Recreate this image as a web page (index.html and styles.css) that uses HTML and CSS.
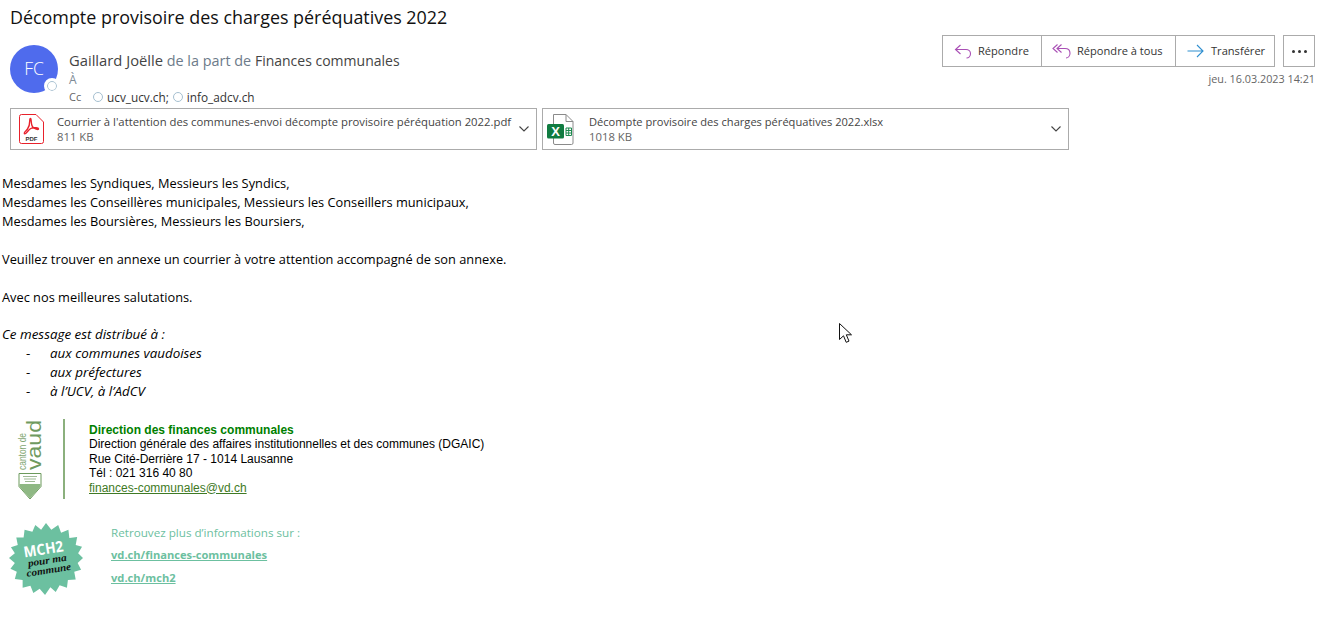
FILE: index.html
```html
<!DOCTYPE html>
<html lang="fr">
<head>
<meta charset="utf-8">
<title>Décompte provisoire des charges péréquatives 2022</title>
<link rel="stylesheet" href="styles.css">
</head>
<body>
<header class="head">
  <h1 class="subject">Décompte provisoire des charges péréquatives 2022</h1>
  <div class="meta">
    <div class="avatar">FC<span class="presence"></span></div>
    <div class="people">
      <div class="from"><span class="sender">Gaillard Joëlle</span> <span class="muted">de la part de</span> <span class="org">Finances communales</span></div>
      <div class="to">À</div>
      <div class="cc"><span class="cc-label">Cc</span><span class="dot"></span><span>ucv_ucv.ch;</span><span class="dot dot-b"></span><span>info_adcv.ch</span></div>
    </div>
    <div class="actions">
      <div class="btn-row">
        <div class="btn-group">
          <button class="btn btn-reply"><svg class="ico" viewBox="0 0 18 18"><path d="M6.500 3 1.500 7.500l5 4.500M1.500 7.500H12c2.600 0 4.500 1.900 4.500 4.300S14.600 16 12.500 16" fill="none" stroke="#a94fb5" stroke-width="1.100"/></svg>Répondre</button>
          <button class="btn btn-all"><svg class="ico ico-all" viewBox="0 0 20 18"><path d="M5.500 2.500 1 6.500l4.500 4M9.500 2.500 5 6.500l4.500 4M5 6.500h8c3 0 5 2 5 4.800S16 16 14 16" fill="none" stroke="#a94fb5" stroke-width="1.100"/></svg>Répondre à tous</button>
          <button class="btn btn-fwd"><svg class="ico ico-fwd" viewBox="0 0 17 14"><path d="M.5 7H16M10 1l6 6-6 6" fill="none" stroke="#2f8fd0" stroke-width="1.100"/></svg>Transférer</button>
        </div>
        <button class="btn-more"><span></span><span></span><span></span></button>
      </div>
      <div class="date">jeu. 16.03.2023 14:21</div>
    </div>
  </div>
  <div class="attachments">
    <div class="att att-pdf">
      <svg class="file-ico" viewBox="0 0 25 30"><path d="M2.500.5H17L24.500 8v19.500a2 2 0 0 1-2 2h-20a2 2 0 0 1-2-2v-25a2 2 0 0 1 2-2Z" fill="#fff" stroke="#e8212b"/><path d="M11.500 4.500c-1.800 0 .8 5.500-3 10.500-2 2.600-4 3.600-3 4.700 1.500 1 3.800-4.500 7-5.500 2.500-.8 7-.5 7 .8 0 1.300-4-.1-6-2.300-1.900-2-.8-8.200-2-8.200Z" fill="none" stroke="#e8212b" stroke-width="1.400"/><text class="pdf-label" x="12.500" y="26.500">PDF</text></svg>
      <div class="att-text"><div class="att-name">Courrier à l'attention des communes-envoi décompte provisoire péréquation 2022.pdf</div><div class="att-size">811 KB</div></div>
      <svg class="chev" viewBox="0 0 10 6"><path d="M.5.500 5 5 9.500.5" fill="none" stroke="#444" stroke-width="1.100"/></svg>
    </div>
    <div class="att att-xls">
      <svg class="file-ico file-xls" viewBox="0 0 27 31"><path d="M6.500.5H19L26 7.500V29a1.500 1.500 0 0 1-1.500 1.500H8A1.500 1.500 0 0 1 6.500 29Z" fill="#fff" stroke="#8a8a8a"/><path d="M19 .5v7h7" fill="none" stroke="#8a8a8a"/><rect x="0" y="10" width="17" height="14.500" rx="1.500" fill="#107c41"/><text class="xls-label" x="8.500" y="22">X</text><path d="M19 14h5.500v7.500H19zM19 16.500h5.500M19 19h5.500M21.700 14v7.500" fill="none" stroke="#1d8a4e"/></svg>
      <div class="att-text"><div class="att-name att-name-xls">Décompte provisoire des charges péréquatives 2022.xlsx</div><div class="att-size">1018 KB</div></div>
      <svg class="chev" viewBox="0 0 10 6"><path d="M.5.500 5 5 9.500.5" fill="none" stroke="#444" stroke-width="1.100"/></svg>
    </div>
  </div>
</header>
<main class="message">
  <p>Mesdames les Syndiques, Messieurs les Syndics,<br>Mesdames les Conseillères municipales, Messieurs les Conseillers municipaux,<br>Mesdames les Boursières, Messieurs les Boursiers,</p>
  <p>Veuillez trouver en annexe un courrier à votre attention accompagné de son annexe.</p>
  <p>Avec nos meilleures salutations.</p>
  <p class="note">Ce message est distribué à :</p>
  <ul class="dist">
    <li>aux communes vaudoises</li>
    <li>aux préfectures</li>
    <li>à l’UCV, à l’AdCV</li>
  </ul>
  <section class="sig">
    <svg class="vd-logo" viewBox="0 0 28 81">
      <text class="vd-small" textLength="37" lengthAdjust="spacingAndGlyphs" transform="translate(9 51) rotate(-90)">canton de</text>
      <text class="vd-big" textLength="50" lengthAdjust="spacingAndGlyphs" transform="translate(24 51) rotate(-90)">vaud</text>
      <path d="M2 54.500h22v13L13 80 2 67.500Z" fill="#fff" stroke="#6c9a5c"/>
      <path d="M2.500 65h21v2.700L13 79.500 2.500 67.700Z" fill="#8fb884"/>
      <path d="M6 57.500h14M7 60h12M8 62.500h10" stroke="#87a87a" stroke-width=".8"/>
    </svg>
    <div class="sig-rule"></div>
    <address class="sig-text">
      <strong>Direction des finances communales</strong>
      <span>Direction générale des affaires institutionnelles et des communes (DGAIC)</span>
      <span>Rue Cité-Derrière 17 - 1014 Lausanne</span>
      <span>Tél : 021 316 40 80</span>
      <a href="#">finances-communales@vd.ch</a>
    </address>
  </section>
  <section class="mch">
    <svg class="badge" viewBox="0 0 76 76">
      <polygon fill="#6cc0a0" points="38,1 43.500,8 50.500,3 53.500,11 61,8 62,16.500 70,15.500 68.500,23.500 75,25.500 71,32 76,37 70.500,42 74,49 67,51 68.500,59 60.500,59.500 59.500,67.500 52,65 48,72 42.500,67 37,75 31.500,68.500 25,73 22,65.500 14,67.500 14,59.500 6,58.500 8,51 1.500,48 6,42 0,37 6,32 2,26 9,23.500 7.500,16 15,16 16,8 24,10 27,3 33,8"/>
      <g transform="rotate(-9 38 38)">
        <text class="mch-title" x="37" y="33" textLength="41" lengthAdjust="spacingAndGlyphs">MCH2</text>
        <text class="mch-script" x="39" y="43" textLength="40" lengthAdjust="spacingAndGlyphs">pour ma</text>
        <text class="mch-script" x="39" y="53" textLength="46" lengthAdjust="spacingAndGlyphs">commune</text>
      </g>
    </svg>
    <div class="mch-text">
      <div>Retrouvez plus d’informations sur :</div>
      <a href="#">vd.ch/finances-communales</a>
      <a href="#">vd.ch/mch2</a>
    </div>
  </section>
</main>
<svg class="cursor" viewBox="0 0 13 21"><path d="M.5.500v16l4-3.700 2.700 6.500 2.800-1.200-2.700-6.300h5.200Z" fill="#fff" stroke="#111"/></svg>
</body>
</html>
```
FILE: styles.css
```css
* { box-sizing: border-box; }
html, body { margin: 0; padding: 0; }
body {
  width: 1327px;
  height: 641px;
  overflow: hidden;
  background: #fff;
  color: #111;
  font-family: "Open Sans", "Noto Sans", sans-serif;
  position: relative;
}
.head { padding: 0 12px 0 10px; }
.subject {
  margin: 0;
  height: 45px;
  padding-top: 4px;
  font-size: 17.9px;
  line-height: 26px;
  font-weight: 400;
  color: #111;
}
.meta { display: flex; height: 63px; }
.avatar {
  position: relative;
  flex: none;
  width: 48px;
  height: 48px;
  border-radius: 50%;
  background: #4f6bed;
  color: #fff;
  font-size: 17.500px;
  font-weight: 300;
  line-height: 47px;
  text-align: center;
}
.presence {
  position: absolute;
  right: -2px;
  bottom: -1px;
  width: 16px;
  height: 16px;
  border-radius: 50%;
  background: #fff;
  border: 3px solid #fff;
  box-shadow: inset 0 0 0 1px #a5bfd0;
}
.people { flex: none; margin-left: 11px; width: 500px; color: #555; }
.from { font-size: 14.300px; line-height: 20px; margin-top: 5px; color: #444; }
.sender { font-size: 14.750px; }
.org { font-size: 14px; }
.muted { color: #6d7b8a; font-size: 14.400px; }
.to { font-size: 12px; line-height: 16px; margin-top: 1px; color: #7d8a96; }
.cc { display: flex; align-items: center; font-size: 11.800px; line-height: 18px; color: #333; }
.cc-label { color: #666; width: 24px; font-size: 11px; }
.dot { width: 10px; height: 10px; border-radius: 50%; border: 1px solid #a5bfd0; margin-right: 4px; }
.dot-b { margin-left: 4px; }
.actions { margin-left: auto; display: flex; flex-direction: column; align-items: flex-end; margin-top: -10px; }
.btn-row { display: flex; gap: 8px; }
.btn-group { display: flex; border: 1px solid #ababab; height: 32px; }
button { font: inherit; background: #fff; color: #333; padding: 0; }
.btn {
  display: flex;
  align-items: center;
  border: 0;
  border-right: 1px solid #ababab;
  font-size: 11.100px;
  line-height: 14px;
  height: 30px;
  padding-bottom: 1px;
}
.btn:last-child { border-right: 0; }
.btn-reply { width: 99px; padding-left: 11px; }
.btn-all { width: 134px; padding-left: 10px; }
.btn-fwd { width: 98px; padding-left: 11px; }
.ico { width: 18px; height: 18px; margin-right: 6px; flex: none; }
.ico-all { width: 20px; margin-right: 5px; }
.ico-fwd { width: 17px; height: 14px; margin-right: 7px; }
.btn-more {
  display: flex;
  align-items: center;
  justify-content: center;
  gap: 3px;
  width: 32px;
  height: 32px;
  border: 1px solid #ababab;
}
.btn-more span { width: 3px; height: 3px; border-radius: 50%; background: #333; }
.date { font-size: 10.800px; line-height: 14px; margin-top: 5px; color: #666; }
.attachments { display: flex; gap: 5px; }
.att {
  display: flex;
  align-items: center;
  height: 42px;
  border: 1px solid #ababab;
  background: #fff;
}
.att-pdf { width: 527px; padding-left: 8px; }
.att-xls { width: 527px; padding-left: 4px; }
.file-ico { width: 25px; height: 30px; flex: none; margin-right: 13px; }
.file-xls { width: 27px; height: 31px; margin-right: 15px; }
.pdf-label { font: 700 6px "Liberation Sans", sans-serif; text-anchor: middle; fill: #333; }
.xls-label { font: 700 13px "Liberation Sans", sans-serif; text-anchor: middle; fill: #fff; }
.att-text { flex: 1; min-width: 0; font-size: 11.300px; line-height: 15px; color: #444; }
.att-name-xls { font-size: 11.120px; }
.att-size { color: #666; }
.chev { width: 10px; height: 6px; flex: none; margin-right: 7px; }
.message { padding: 23.500px 0 0 2px; font-size: 12.800px; line-height: 19px; color: #000; }
.message p { margin: 0 0 19px; }
.message .note { margin: -1px 0 0; font-style: italic; font-size: 13.400px; }
.dist { list-style: none; margin: 0; padding: 0 0 0 48px; font-style: italic; font-size: 13.400px; position: relative; }
.dist li::before { content: "-"; font-style: normal; position: absolute; left: 24px; }
.sig { display: flex; height: 80px; margin: 18px 0 0 15px; }
.vd-logo { width: 28px; height: 81px; flex: none; }
.vd-small { font: 10.500px "Liberation Sans", sans-serif; fill: #7fa672; }
.vd-big { font: 21px "Liberation Sans", sans-serif; fill: #6f9a5f; }
.sig-rule { width: 2px; height: 80px; margin-left: 18px; background: #8bb07d; flex: none; }
.sig-text {
  display: flex;
  flex-direction: column;
  align-items: flex-start;
  margin: 4px 0 0 24px;
  font: normal 12px/14.500px "Liberation Sans", sans-serif;
  color: #000;
}
.sig-text strong { color: #008000; }
.sig-text a { color: #3f7a25; }
.mch { display: flex; margin: 23px 0 0 7px; }
.badge { width: 74px; height: 74px; flex: none; }
.mch-title { font: 700 15.500px "Open Sans", sans-serif; text-anchor: middle; fill: #fff; }
.mch-script { font: italic 700 10.500px "Liberation Serif", serif; text-anchor: middle; fill: #111; }
.mch-text { display: flex; flex-direction: column; align-items: flex-start; margin-left: 28px; font-size: 11.660px; line-height: 22.500px; color: #6cc0a0; }
.mch-text a { color: #6cc0a0; font-weight: 700; font-size: 11.150px; }
.cursor { position: absolute; left: 839px; top: 323px; width: 13px; height: 21px; }
```
